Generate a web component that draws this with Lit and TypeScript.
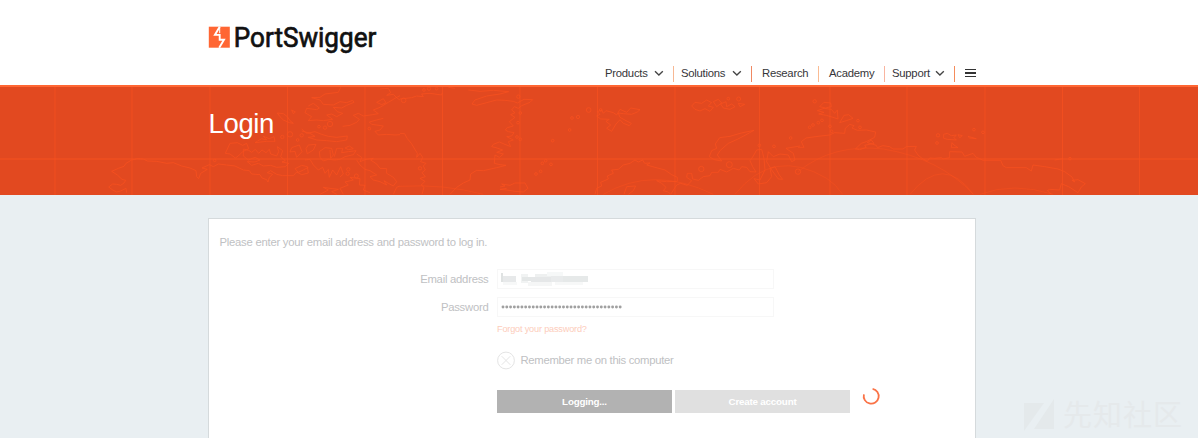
import { LitElement, html, css, svg } from "lit";
import { customElement } from "lit/decorators.js";

const GRID = [55, 132, 210, 287.5, 365, 442.5, 520, 597.5, 675, 759.5, 830, 907, 985, 1062.5, 1139.5];

// Coastlines are drawn at three times the banner's size, in three panels.
const WEST = `M380 338L378 325L362 333L350 336L338 330L326 321L338 312L350 313L362 316L372 309L377 301L366 298L352 285L335 274L355 265L372 259L378 250L395 240L412 236L430 237L442 243L470 244L500 250L520 248L545 258L570 264L588 272L590 290L596 296L602 280L622 268L606 264L628 254L640 260L655 252L680 255L705 258L730 270L748 272L755 282L780 284L786 294L800 299L804 306L808 292L818 283L802 278L812 272L830 283L848 287L880 287L890 276L905 284L925 279L922 260L905 256L885 266L895 277L910 270L925 262
M676 220L690 190L712 188L728 196L740 190L746 206L728 215L715 228L706 234L690 222Z
M730 207L746 211L755 217L766 208L776 220L786 210L798 218L808 208L812 222L830 228L836 215L832 200L848 212L842 230L856 242L846 246L866 250L856 260L830 262L812 256L790 258L775 250L755 256L742 245L765 246L780 240L765 232L745 240L730 228Z
M875 203L870 216L885 214L890 232L906 215L898 195Z M918 206L925 195L948 193L940 210L922 221Z
M915 240L930 238L940 255L955 270L968 262L975 280L985 268L988 292L998 270L1010 285L1022 260L1030 282L1020 291 M960 232L958 215L975 203L995 205L1000 225L992 235L990 210 M1003 230L1010 205L1028 205L1025 218L1045 215L1068 212L1060 224L1035 230L1020 238L1005 240L985 238L970 243L960 232
M1035 204L1048 198L1060 206L1045 209Z M1070 222L1085 232L1080 245L1098 238L1120 235L1112 240L1130 252L1140 265L1160 266L1160 280L1180 292L1190 305L1180 318L1165 310L1152 302L1160 315L1140 305L1120 300L1110 290L1130 285L1110 272L1095 268L1080 255L1070 240
M960 343L985 330L970 322L990 325L1015 328L995 335L1010 343 M1030 343L1020 325L1045 315L1035 306L1060 300L1050 292L1080 296L1078 315L1095 316L1090 330L1110 338 M1180 343L1190 322L1200 318
M935 53L960 52L975 42L1015 37L1022 22 M935 53L960 60L970 73L1000 75L1020 65L1040 68L1058 61L1062 67L1040 76L1025 84L1000 82L1012 95L1028 100L1010 110L995 102L980 105L998 118L970 122L950 120L925 122L935 110L915 98L920 85L950 89L958 84L940 70L925 78
M1028 139L1050 136L1070 127L1078 118L1060 106L1075 100L1090 108L1118 104L1135 101L1120 90L1140 82L1165 67L1185 55L1200 47 M1130 67L1150 56L1158 68L1145 74L1130 67 M1140 27L1165 25L1172 38L1160 46L1180 43L1192 55L1200 60
M1150 115L1130 120L1108 126L1115 133L1150 138L1140 150L1125 154L1135 165L1160 163L1185 165L1200 164
M905 147L920 160L945 155L965 163L985 169L1010 172L1042 168L1040 180L1010 185L980 182L950 180L925 172L945 169L930 160L905 153
M832 99L850 101L862 110L870 122L880 130L868 128L850 120L840 110Z M875 90L886 96L880 101Z
M765 188L785 176L800 180L790 169L808 176L822 170L825 184L800 184Z`;
const MID = `M0 57L35 53L50 48L70 50L65 42L90 40L125 45L127 38 M145 22L165 25
M205 30L240 34L280 31L326 35L300 42L260 48L225 60L216 72L230 76L260 68L290 60L315 61L340 64L352 69L372 58L398 59L390 67L365 77L355 85L343 80L335 90L345 98L332 104L345 112L328 125L340 138L322 143L316 150L325 155L342 158L335 168L320 170L340 180L325 185L332 200L312 192L298 186L280 193L275 200L288 203L308 210L290 217L310 222L298 232L285 225L283 250L300 254L318 256L290 263L250 272L230 271L212 282L210 300L190 309L170 322L150 343
M0 160L14 161L22 176L34 190L44 207L52 220L50 232L60 220L68 232L62 245L78 250L70 258L76 270L66 278L76 290L60 295L75 304L64 315L72 322L66 343
M300 321L315 318L305 312L330 316L345 309L375 309L384 325L370 336L345 334L320 330L300 328L320 325
M592 95L605 90L610 100L618 92L640 98L650 105L660 88L680 97L692 84L720 89L712 96L695 103L670 101L655 99L660 112L678 122L694 130L688 137L670 130L660 119L648 132L635 154L620 145L632 135L618 124L628 118L602 117L590 108L600 103Z
M585 343L590 325L605 318L602 307L625 297L622 288L640 280L635 270L655 268L670 255L690 250L705 240L715 246L728 240L734 250L750 249L740 255L765 262L795 270L815 284L832 292L832 304L800 305L770 302L785 310L798 322L790 332L805 336L812 343
M812 343L830 315L842 310L862 316L875 302L860 292L862 280L875 280L878 297L895 301L910 290L930 287L935 277L955 277L960 268L980 276L1000 265L1018 270L1025 260L1040 262L1050 275L1068 276L1058 260L1050 242L1060 228L1070 210L1085 208L1092 235L1095 270L1080 300L1062 296L1075 312L1100 308L1115 290L1110 265L1125 260L1138 285L1148 298L1135 297L1115 270L1100 245L1105 215L1120 230L1140 222L1165 225L1175 245L1185 240L1180 220L1158 205L1200 198
M1062 151L1035 166L1012 178L985 190L960 212L952 225L965 243L943 239L928 230L935 212L950 205L946 192L959 173L990 169L1020 160Z
M875 78L885 67L905 70L920 60L935 68L925 78L940 82L930 94L915 86L900 93L885 88Z M940 65L955 58L965 69L950 80Z M962 72L978 65L980 80L995 72L1005 80L990 88L970 84Z M1015 70L1034 73L1020 80Z M672 343L680 320L707 318L700 332L685 343`;
const EAST = `M0 202L18 202L10 185L24 174L60 169L95 165L110 158L140 160L142 145L155 133L168 137L162 144L178 151L205 150L233 156L230 172L205 185L190 190L172 207L185 209L205 202L200 196L228 190L220 180L208 188L235 196L238 203L255 197L275 200L285 207L315 207L325 200L355 199L350 210L360 225L372 235L388 244L395 234L410 235L430 233L435 237L455 233L455 215L492 216L500 229L525 220L535 232L545 236L555 241L608 241L615 257L625 263L685 263L700 273L705 255L740 260L780 267L800 275L822 291L830 306L822 301L840 299L862 311L850 321L840 338L812 320L790 311L785 330L755 328L748 332L760 343
M65 80L78 67L98 69L100 80L82 84Z M58 92L78 85L100 88L110 100L118 90L120 117L105 112L85 106L62 102L78 97Z M125 128L138 106L152 104L165 115L145 122Z
M437 163L448 160L460 167L475 165L468 173L475 180L448 178L437 175Z M480 164L493 167L485 173Z M462 188L468 195L480 203L460 203Z M510 169L535 176L515 174Z M770 240L795 236`;
const ISLES: [number, number, number][] = [
  [644, 241, 4], [847, 171, 5], [870, 163, 8], [893, 180, 4], [905, 166, 5], [957, 140, 4], [975, 143, 5], [990, 132, 8], [1108, 146, 4], [1045, 268, 5], [1043, 281, 5], [1069, 288, 6],
  [1211, 61, 7], [1272, 30, 4], [1287, 26, 5], [1310, 26, 4], [1260, 265, 5], [1555, 50, 5], [1561, 99, 4], [1554, 128, 4], [1551, 171, 4], [1561, 178, 4], [1627, 250, 4], [1637, 242, 4],
  [1716, 114, 4], [1734, 111, 5], [1766, 90, 7], [1802, 90, 4], [1709, 150, 4], [1658, 182, 4], [1608, 282, 4], [1622, 274, 4], [1653, 253, 4], [2188, 254, 9], [2104, 267, 8], [2278, 196, 4], [2322, 199, 4], [2372, 174, 4], [2216, 57, 6], [2185, 56, 4], [2394, 275, 8],
  [2444, 64, 5], [2429, 142, 4], [2439, 135, 4], [2455, 128, 4], [2466, 121, 4], [2490, 139, 4], [2495, 154, 4], [2574, 122, 4], [2580, 142, 4], [2814, 166, 5], [2811, 189, 4], [2922, 149, 4], [2949, 157, 4], [3210, 236, 4],
];

const MOSAIC: [number, number, number, number, string][] = [
  [0, 2, 2, 9, "#dfe2e2"], [2, 5, 13, 6, "#e7e9ea"], [2, 11, 14, 3, "#f7f8f8"], [20, 3, 7, 9, "#f1f3f3"], [21, 6, 13, 4, "#e4e7e7"], [34, 3, 20, 5, "#eef0f0"],
  [30, 6, 20, 5, "#e5e7e8"], [27, 11, 24, 4, "#f5f6f6"], [50, 5, 12, 6, "#e9ebec"], [62, 5, 25, 6, "#e6e9e9"], [54, 11, 28, 3, "#f7f8f8"], [46, 1, 16, 4, "#f6f8f8"],
];

const chevron = svg`<path d="M1 1.2L4.9 5L8.8 1.2" fill="none" stroke="#444" stroke-width="1.35"/>`;

@customElement("app-root")
export class AppRoot extends LitElement {
  static styles = css`
    :host { display: flex; flex-direction: column; height: 438px; overflow: hidden; background: #e9eff2; font: 11.3px "Liberation Sans", Arial, sans-serif; letter-spacing: -0.25px; position: relative; }
    svg { display: block; overflow: visible; }
    header { background: #fff; height: 85px; border-bottom: 2px solid #ff6633; box-sizing: content-box; flex: none; }
    .wrap { width: 768px; margin-left: 208px; display: flex; flex-direction: column; }
    .logo { margin-top: 20px; letter-spacing: 0; }
    nav { display: flex; align-items: center; align-self: flex-end; height: 17px; margin-top: 5px; color: #36363a; }
    .item { display: flex; align-items: center; box-sizing: border-box; height: 16px; white-space: nowrap; border-right: 1px solid #f0a070; }
    .item span { line-height: 14px; margin-bottom: 1px; }
    .item svg { margin-left: auto; }
    .burger { display: flex; flex-direction: column; gap: 2px; width: 11px; margin: 0 0 1px 10px; }
    .burger i { height: 1.5px; background: #333; }
    .banner { height: 108px; background: #e24920; flex: none; display: grid; overflow: hidden; }
    .banner > * { grid-area: 1 / 1; }
    .banner > svg { overflow: hidden; }
    h1 { margin: 21px 0 0 208.6px; font-size: 27.5px; letter-spacing: -0.4px; line-height: 32px; font-weight: 400; color: #fff; }
    .card { margin: 23px 0 0 208px; width: 768px; box-sizing: border-box; flex: 1; background: #fff; border: 1px solid #d5dadc; border-bottom: 0; padding: 16px 0 0 10.5px; color: #c0c1c3; display: flex; flex-direction: column; }
    .intro { line-height: 14px; }
    .form { display: grid; grid-template-columns: 269px 353px; column-gap: 8.5px; }
    .email { margin-top: 20px; }
    .row { margin-top: 8px; }
    label { text-align: right; line-height: 20px; }
    .field { width: 277px; height: 20px; box-sizing: border-box; border: 1px solid #f7f7f7; padding-left: 3px; display: flex; align-items: center; }
    .forgot { margin: 6px 0 0 277.5px; font-size: 9.2px; letter-spacing: -0.2px; line-height: 12px; color: #fdcdbc; }
    .remember { margin: 16px 0 0 277.5px; display: flex; align-items: center; gap: 4.5px; height: 19px; }
    .remember span { line-height: 14px; margin-bottom: 1px; letter-spacing: -0.3px; }
    .actions { margin: 20px 0 0 277.5px; display: flex; gap: 3px; }
    .btn { width: 175px; height: 23px; display: grid; place-items: center; color: #fff; font-weight: 700; font-size: 9.8px; letter-spacing: -0.2px; }
    .busy { background: #b2b2b2; }
    .idle { background: #e0e0e0; }
    .spin { margin: -3px 0 0 9px; }
    .mark { position: absolute; left: 1022px; top: 394px; letter-spacing: 0; }
  `;

  item(label: string, width: number, color: string, arrow: boolean, lead = 0, gap = 0) {
    return html`<div class="item" style="width:${width}px;padding-left:${lead}px;padding-right:${gap}px;border-color:${color}">
      <span>${label}</span>${arrow ? html`<svg width="10" height="7">${chevron}</svg>` : ""}</div>`;
  }

  render() {
    return html`
      <header><div class="wrap">
        <svg class="logo" width="176" height="40" viewBox="208 20 176 40">
          <rect x="208.8" y="26.7" width="21" height="21" fill="#ff6633"/>
          <path d="M219.7 26.7L214.9 34.9H219.7V39.7H224L219.2 47.7" fill="none" stroke="#fff" stroke-width="1.9"/>
          <path d="M219.7 26.7V33.2" stroke="#fff"/>
          <text x="233.8" y="46.7" font-family="Roboto" font-size="27.3" font-weight="400" textLength="142.5" lengthAdjust="spacingAndGlyphs" fill="#111" stroke="#111" stroke-width=".7">PortSwigger</text>
        </svg>
        <nav>
          ${this.item("Products", 69, "#f7b894", true, 0, 9)}
          ${this.item("Solutions", 78, "#f08862", true, 7, 9)}
          ${this.item("Research", 67, "#fabb93", false, 10)}
          ${this.item("Academy", 66, "#f9b5a0", false, 10)}
          ${this.item("Support", 70, "#f58c5b", true, 7, 9)}
          <div class="burger"><i></i><i></i><i></i></div>
        </nav>
      </div></header>
      <div class="banner">
        <svg width="1198" height="108" viewBox="0 87 1198 108" fill="none" stroke="#f8511f">
          <g stroke-opacity=".7">${GRID.map((x) => svg`<path d="M${x} 87V195"/>`)}</g>
          <path d="M0 159H1198" stroke-width="2" stroke-opacity=".45"/>
          <g transform="translate(0 80) scale(.33333)" stroke-width="3" stroke-opacity=".75" stroke-linejoin="round">
            <path d=${WEST}/><path d=${MID} transform="translate(1200 0)"/><path d=${EAST} transform="translate(2394 0)"/>
            ${ISLES.map(([x, y, r]) => svg`<circle cx=${x} cy=${y} r=${r}/>`)}
            <path stroke-opacity=".5" d="M1200 319Q1330 311 1450 343M1810 343Q1960 255 2140 343M2205 343Q2320 200 2480 295Q2510 315 2528 343M2394 275Q2500 190 2650 207Q2820 235 2920 343M2730 343Q2830 220 2920 343M2940 343Q3040 305 3160 343"/>
          </g>
        </svg>
        <h1>Login</h1>
      </div>
      <main class="card">
        <div class="intro">Please enter your email address and password to log in.</div>
        <div class="form email"><label>Email address</label><div class="field">
          <svg width="100" height="17">${MOSAIC.map(([x, y, w, h, c]) => svg`<rect x=${x} y=${y} width=${w} height=${h} fill=${c}/>`)}</svg></div></div>
        <div class="form row"><label>Password</label><div class="field">
          <svg width="124" height="8">${Array.from({ length: 32 }, (_, i) => svg`<circle cx=${2 + i * 3.78} cy="4" r="1.45" fill="#a0a0a0"/>`)}</svg></div></div>
        <div class="forgot">Forgot your password?</div>
        <div class="remember">
          <svg width="19" height="19" fill="none" stroke="#e4e4e4"><circle cx="9" cy="9.5" r="8.4"/><path d="M4.7 5.2L13.3 13.8M13.3 5.2L4.7 13.8"/></svg>
          <span>Remember me on this computer</span>
        </div>
        <div class="actions">
          <div class="btn busy">Logging...</div><div class="btn idle">Create account</div>
          <svg class="spin" width="20" height="20"><path d="M10.6 1.8A7.5 7.5 0 1 1 1.9 7.4" fill="none" stroke="#fa7347" stroke-width="1.8"/></svg>
        </div>
      </main>
      <svg class="mark" width="170" height="44" fill="#e4e9eb">
        <path d="M2 9H22L2 37ZM32 5V35H12Z"/>
        <text x="41" y="32" font-family="Noto Sans CJK SC, sans-serif" font-size="29" textLength="119" fill="#e5e9eb">先知社区</text>
      </svg>`;
  }
}
